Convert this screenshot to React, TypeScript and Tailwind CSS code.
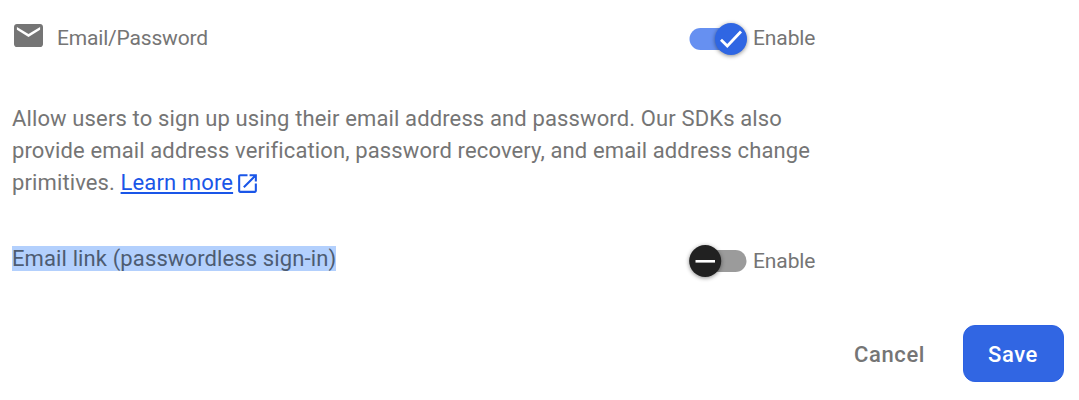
import React from 'react';

function Toggle({ on }: { on: boolean }) {
  return (
    <svg width="66" height="46" viewBox="0 0 66 46" className="block shrink-0">
      <rect x="5.5" y="12" width="57" height="22" rx="11" fill={on ? '#6690f1' : '#9b9b9b'} />
      <circle cx={on ? 47 : 21.2} cy="23" r="16" fill={on ? '#2f66e3' : '#212121'} className="drop-shadow-[0_1px_2px_rgba(0,0,0,0.45)]" />
      {on ? (
        <path d="M37 23.7L43.3 30L57 15.5" fill="none" stroke="white" strokeWidth="2.8" />
      ) : (
        <path d="M11.5 23.3H31" stroke="white" strokeWidth="2.6" />
      )}
    </svg>
  );
}

export default function App() {
  return (
    <main className="h-[400px] w-[1079px] overflow-hidden bg-white font-['Roboto',sans-serif] text-[22px] leading-8 text-[#757575]">
      <div className="flex h-[78px] items-start pl-[14px]">
        <svg width="29" height="23" viewBox="2 4 20 16" preserveAspectRatio="none" fill="#757575" className="mt-[23.5px] shrink-0">
          <path d="M20 4H4c-1.1 0-1.99.9-1.99 2L2 18c0 1.1.9 2 2 2h16c1.1 0 2-.9 2-2V6c0-1.1-.9-2-2-2zm0 4l-8 5-8-5V6l8 5 8-5v2z" />
        </svg>
        <span className="ml-[14px] mt-[22px] w-[627px] text-[21px] tracking-[-0.18px]">Email/Password</span>
        <div className="mt-4"><Toggle on /></div>
        <span className="ml-[3px] mt-[22px] text-[21px] tracking-[-0.1px]">Enable</span>
      </div>
      <p className="mt-[25px] pl-3 tracking-[0.12px]">
        <span className="block tracking-[0.13px]">Allow users to sign up using their email address and password. Our SDKs also</span>
        <span className="block">provide email address verification, password recovery, and email address change</span>
        <span className="flex items-center">primitives.&nbsp;<a href="#" className="text-[#1a56e8] underline">Learn more</a>
          <svg width="25" height="25" viewBox="0 0 24 24" fill="#1a56e8" className="ml-[2px] mt-px"><path d="M19 19H5V5h7V3H5c-1.1 0-2 .9-2 2v14c0 1.1.9 2 2 2h14c1.1 0 2-.9 2-2v-7h-2v7zM14 3v2h3.59l-9.83 9.83 1.41 1.41L19 6.41V10h2V3h-7z" /></svg>
        </span>
      </p>
      <div className="flex h-[93px] items-start pl-3 pt-[39px]">
        <div className="w-[672px] pt-[5px]"><span className="bg-[#b3d0fd] tracking-[0.12px] text-[#4d5c72]">Email link (passwordless sign-in)</span></div>
        <Toggle on={false} />
        <span className="ml-[3px] mt-[7px] text-[21px] tracking-[-0.1px]">Enable</span>
      </div>
      <div className="mt-[33px] flex justify-end gap-[26px] pr-[15px] font-medium tracking-[0.6px]">
        <button className="h-[57px] px-3 pt-[2px]">Cancel</button>
        <button className="h-[57px] w-[101px] rounded-[12px] border border-[#2c62e3] bg-[#3166e3] pr-px pt-[2px] text-white">Save</button>
      </div>
    </main>
  );
}
